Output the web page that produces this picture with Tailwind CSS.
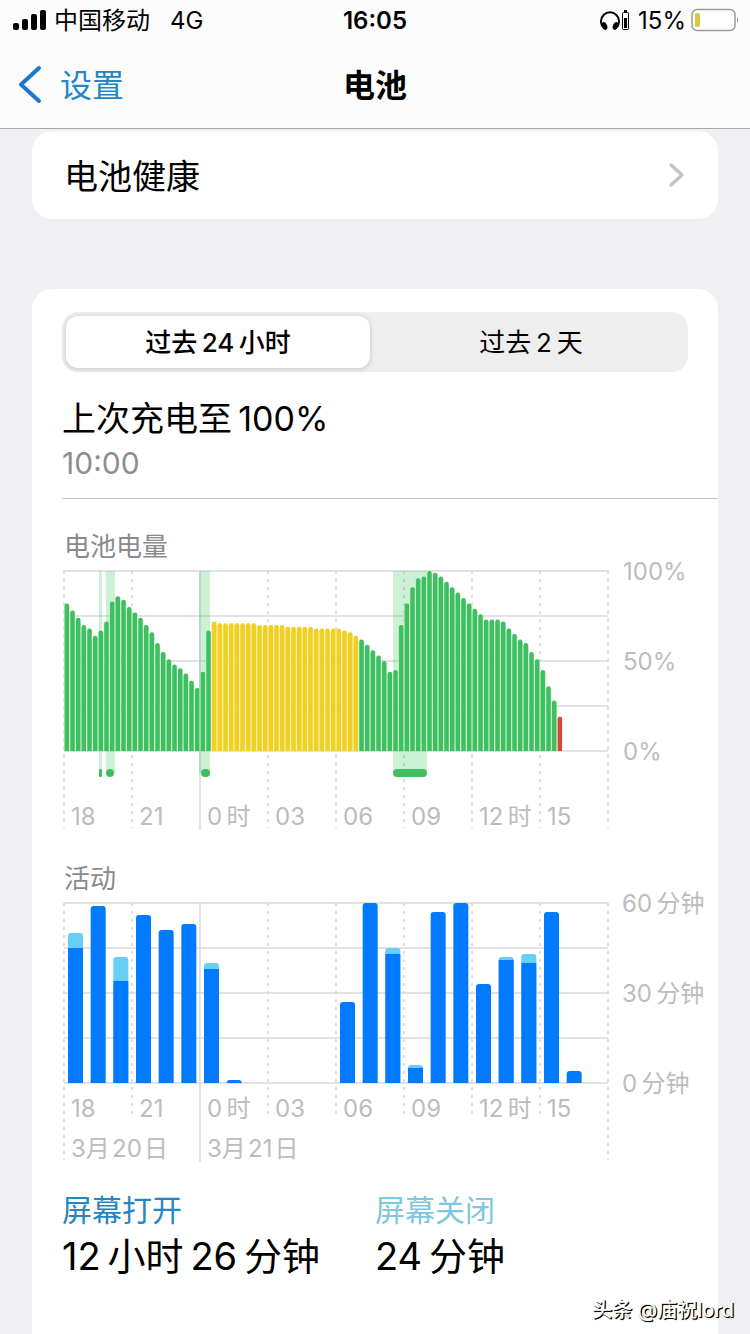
<!DOCTYPE html>
<html lang="zh-CN">
<head>
    <meta charset="UTF-8">
    <meta name="viewport" content="width=device-width, initial-scale=1.0">
    <title>电池</title>
    <script src="https://cdn.jsdelivr.net/npm/@tailwindcss/browser@4"></script>
    <style>
        body {
            font-family: Inter, "Noto Sans CJK SC", sans-serif;
        }
    </style>
</head>
<body class="relative flex min-h-screen flex-col bg-[#f0f0f4] text-black">

    <header class="border-b border-[#a9a9ac] bg-[#fcfcfd]">
        <!-- Status bar -->
        <div class="grid h-10 grid-cols-3 items-center px-2.5 text-[24px] leading-none">
            <div class="flex items-center gap-2 pl-0.5">
                <svg class="h-[22px] w-[34px]" viewBox="0 0 34 22" aria-hidden="true">
                    <rect x="1" y="14" width="6" height="7" rx="2"/>
                    <rect x="10" y="10" width="6" height="11" rx="2"/>
                    <rect x="19" y="5" width="6" height="16" rx="2"/>
                    <rect x="28" y="1" width="6" height="20" rx="2"/>
                </svg>
                <span class="pt-0.5">中国移动</span>
                <span class="ml-3 pt-0.5">4G</span>
            </div>
            <span class="pt-0.5 text-center font-semibold">16:05</span>
            <div class="flex items-center justify-end">
                <svg class="h-[22px] w-[30px]" viewBox="0 0 30 22" aria-hidden="true">
                    <path d="M3 18 A9 9 0 1 1 17 18" fill="none" stroke="#000" stroke-width="2"/>
                    <ellipse cx="4.5" cy="17" rx="2.6" ry="4" transform="rotate(-22 4.5 17)"/>
                    <ellipse cx="15.5" cy="17" rx="2.6" ry="4" transform="rotate(22 15.5 17)"/>
                    <rect x="22.5" y="3.5" width="6" height="17" rx="1" fill="#fff" stroke="#000"/>
                    <rect x="24" y="1" width="3" height="2"/>
                    <rect x="24" y="9" width="3" height="10"/>
                </svg>
                <span class="ml-2 pt-0.5">15%</span>
                <svg class="ml-1 h-6 w-[50px]" viewBox="0 0 50 24" aria-hidden="true">
                    <rect x="2" y="1.5" width="43" height="21" rx="5" fill="#fff" stroke="#9b9b9b" stroke-width="1.5"/>
                    <rect x="5" y="5" width="5" height="14" rx="2" fill="#ddc83c"/>
                    <path d="M47 8.5 q2 3.5 0 7 z" fill="#9b9b9b"/>
                </svg>
            </div>
        </div>
        <!-- Navigation bar -->
        <div class="grid h-[88px] grid-cols-3 items-center px-4 text-[32px] leading-none">
            <a href="#" class="flex items-center gap-4 text-[#2486c4]">
                <svg class="h-10 w-7" viewBox="0 0 28 40" fill="none" stroke="#1c78c8" stroke-width="4" stroke-linecap="round" stroke-linejoin="round" aria-hidden="true">
                    <path d="M23 4 L5 20.5 L23 37"/>
                </svg>
                <span class="pt-1">设置</span>
            </a>
            <h1 class="pt-1 text-center font-bold">电池</h1>
        </div>
    </header>

    <main class="flex flex-1 flex-col px-8 pt-0.5">
        <a href="#" class="flex h-22 items-center justify-between rounded-[20px] bg-white pr-8 pl-8 text-[34px] leading-none">
            <span class="pt-1">电池健康</span>
            <svg class="h-7 w-5" viewBox="0 0 20 28" fill="none" stroke="#c4c4c6" stroke-width="3.5" stroke-linecap="round" stroke-linejoin="round" aria-hidden="true">
                <path d="M5 4 L16 14 L5 24"/>
            </svg>
        </a>

        <section class="mt-[70px] flex-1 rounded-t-[20px] bg-white pt-[23px] pb-14 pl-[30px]">
            <div class="mr-[30px] grid h-[60px] grid-cols-[304fr_318fr] rounded-2xl bg-[#eeeeef] py-1 pl-1 text-[26px] leading-none">
                <button class="rounded-xl bg-white pt-0.5 font-medium shadow-[0_1px_4px_1px_#cfcfcf]">过去&thinsp;24&thinsp;小时</button>
                <button class="pt-0.5 pl-1">过去&thinsp;2&thinsp;天</button>
            </div>

            <div class="flex h-[127px] flex-col justify-center gap-3 border-b border-[#c6c6c8] pt-2.5 leading-none">
                <h2 class="text-[34px]">上次充电至&thinsp;100%</h2>
                <p class="text-[30px] text-[#8e8e92]">10:00</p>
            </div>

            <h3 class="mt-[35px] pl-0.5 text-[26px] leading-[26px] text-[#8a8a8e]">电池电量</h3>
            <svg id="levelChart" class="block w-full overflow-visible" viewBox="0 0 656 280" role="img" aria-label="电池电量"></svg>

            <h3 class="mt-[26px] pl-0.5 text-[26px] leading-[26px] text-[#8a8a8e]">活动</h3>
            <svg id="activityChart" class="block w-full overflow-visible" viewBox="0 0 656 280" role="img" aria-label="活动"></svg>

            <dl class="mt-5 mr-[30px] grid grid-cols-2">
                <div>
                    <dt class="text-[30px] leading-9 text-[#2486c4]">屏幕打开</dt>
                    <dd class="text-[38px] leading-[56px]">12&thinsp;小时&thinsp;26&thinsp;分钟</dd>
                </div>
                <div>
                    <dt class="text-[30px] leading-9 text-[#7cc8dc]">屏幕关闭</dt>
                    <dd class="text-[38px] leading-[56px]">24&thinsp;分钟</dd>
                </div>
            </dl>
        </section>
    </main>

    <div class="absolute right-4 bottom-4 text-[20px] leading-7 font-medium text-white [text-shadow:1px_1px_0_#000,1px_1px_1px_#000]">头条 @庙祝lord</div>

    <script>
        const LEFT = 2, TOP = 11, WIDTH = 544, HEIGHT = 180;
        const hours = ['18', '21', '0\u2009时', '03', '06', '09', '12\u2009时', '15'];

        // battery level in percent, one value per 15 minutes
        const levels = [
            82, 78, 74, 70, 68, 64, 67, 72, 83, 86, 84, 80, 77, 74, 70, 66, 60, 55, 51, 48, 46, 43, 39, 35, 44, 67,
            72, 71, 71, 71, 71, 71, 71, 71, 70, 70, 70, 70, 70, 69, 69, 69, 69, 69, 68, 68, 68, 68, 68, 67, 66, 64,
            62, 59, 56, 53, 50, 44, 45, 70, 82, 91, 96, 97, 100, 99, 97, 94, 91, 88, 85, 82, 79, 76, 73, 73, 73, 72,
            68, 65, 62, 60, 55, 51, 45, 36, 28, 19
        ];
        const lowPower = [26, 51];
        // [band x, band width, marker x, marker width] of each charging period
        const charging = [[35, 3, 35, 3], [42, 9, 42, 8], [135, 11, 137, 9], [329, 34, 329, 34]];

        // minutes per hour: [screen on, screen off]
        const activity = [
            [45, 5], [59, 0], [34, 8], [56, 0], [51, 0], [53, 0], [38, 2], [1, 0],
            [0, 0], [0, 0], [0, 0], [0, 0], [27, 0], [60, 0], [43, 2], [5, 1],
            [57, 0], [60, 0], [33, 0], [41, 1], [40, 3], [57, 0], [4, 0], [0, 0]
        ];

        function gridLines(innerEnd, outerEnd) {
            let out = '';
            for (let i = 0; i <= 4; i++) {
                const y = TOP + i * HEIGHT / 4;
                out += `<line x1="${LEFT}" x2="${LEFT + WIDTH}" y1="${y}" y2="${y}" stroke="#d8d8da" stroke-width="1.5"/>`;
            }
            for (let i = 0; i <= 8; i++) {
                const x = LEFT + i * WIDTH / 8;
                if (i === 2) {
                    out += `<line x1="${x}" x2="${x}" y1="${TOP}" y2="${outerEnd + 2}" stroke="#d8d8da" stroke-width="1.5"/>`;
                } else {
                    const end = i % 8 ? innerEnd : outerEnd;
                    out += `<line x1="${x}" x2="${x}" y1="${TOP}" y2="${end}" stroke="#d4d4d7" stroke-width="1.5" stroke-dasharray="3 5"/>`;
                }
            }
            return out;
        }

        function label(x, y, text) {
            return `<text x="${x}" y="${y}" class="fill-[#bcbcbe] text-[24px]">${text}</text>`;
        }

        function hourLabels(y) {
            return hours.map((h, i) => label(LEFT + i * WIDTH / 8 + 7, y, h)).join('');
        }

        function roundedBar(x, y, w, h, r, color) {
            r = Math.min(r, h);
            return `<path d="M${x} ${y + h} v${r - h} q0 ${-r} ${r} ${-r} h${w - 2 * r} q${r} 0 ${r} ${r} v${h - r} z" fill="${color}"/>`;
        }

        function drawLevels() {
            const step = WIDTH / 96;
            const base = TOP + HEIGHT;
            let out = gridLines(268, 268);
            charging.forEach(([x, w, mx, mw]) => {
                out += `<rect x="${LEFT + x}" y="${TOP}" width="${w}" height="202" fill="#34c759" fill-opacity="0.25"/>`;
                out += `<rect x="${LEFT + mx}" y="209" width="${mw}" height="8" rx="${mw > 4 ? 4 : 1}" fill="#40bf60"/>`;
            });
            levels.forEach((v, i) => {
                let color = '#40bf60', gap = '#c4f5cf';
                if (i >= lowPower[0] && i <= lowPower[1]) { color = '#f0d028'; gap = '#fcf2a0'; }
                if (v < 20) { color = '#d5493b'; gap = '#fff'; }
                const h = v / 100 * HEIGHT;
                out += `<rect x="${LEFT + i * step}" y="${base - h + 2}" width="${step}" height="${h - 2}" fill="${gap}"/>`;
                out += roundedBar(LEFT + i * step + 0.6, base - h, 4.5, h, 2, color);
            });
            out += hourLabels(265);
            ['100%', '50%', '0%'].forEach((t, i) => out += label(561, TOP + i * 90 + 9, t));
            document.getElementById('levelChart').innerHTML = out;
        }

        function drawActivity() {
            const step = WIDTH / 24;
            const base = TOP + HEIGHT;
            let out = gridLines(225, 268);
            activity.forEach(([on, off], i) => {
                const x = LEFT + i * step + 4;
                if (off) {
                    out += roundedBar(x, base - (on + off) * 3, 15, (on + off) * 3, 3, '#67cff5');
                    out += `<rect x="${x}" y="${base - on * 3}" width="15" height="${on * 3}" fill="#007aff"/>`;
                } else if (on) {
                    out += roundedBar(x, base - on * 3, 15, on * 3, 3, '#007aff');
                }
            });
            out += hourLabels(225);
            out += label(LEFT + 7, 265, '3月\u200a20\u200a日') + label(LEFT + 143, 265, '3月\u200a21\u200a日');
            ['60', '30', '0'].forEach((t, i) => out += label(560, TOP + i * 90 + 9, t + '\u2009分钟'));
            document.getElementById('activityChart').innerHTML = out;
        }

        drawLevels();
        drawActivity();
    </script>

</body>
</html>
